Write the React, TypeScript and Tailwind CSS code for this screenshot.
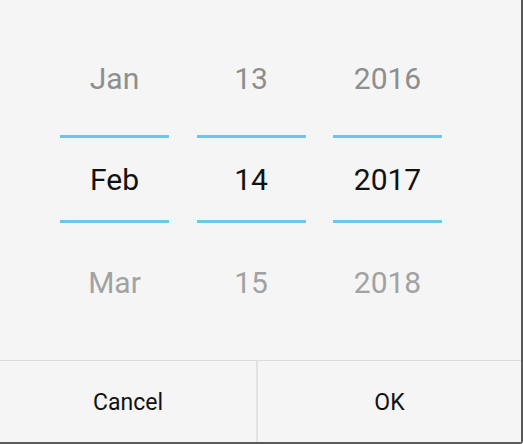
const columns = [
  { prev: "Jan", current: "Feb", next: "Mar" },
  { prev: "13", current: "14", next: "15" },
  { prev: "2016", current: "2017", next: "2018" },
];

function WheelColumn({ prev, current, next }: { prev: string; current: string; next: string }) {
  return (
    <div className="flex w-[109px] flex-col pt-[28px]">
      <div className="flex h-[100px] items-center justify-center text-[30px] text-[#8e8e8e]">{prev}</div>
      <div className="mt-[7px] h-[3px] bg-[#6cc6ea]" />
      <div className="flex h-[82px] items-center justify-center text-[30px] text-[#111]">{current}</div>
      <div className="h-[3px] bg-[#6cc6ea]" />
      <div className="flex h-[118px] items-center justify-center text-[30px] text-[#a2a2a2]">{next}</div>
    </div>
  );
}

export default function App() {
  return (
    <div
      className="h-[444px] w-[523px] overflow-hidden rounded-br-[3px] border-b-2 border-r-2 border-[#5a5a5a] bg-[#f5f5f5]"
      style={{ fontFamily: "Roboto, 'Liberation Sans', sans-serif" }}
    >
      <div className="flex h-[360px] gap-[27.5px] pl-[60px]">
        {columns.map((c) => (
          <WheelColumn key={c.current} {...c} />
        ))}
      </div>
      <div className="flex h-[82px] border-t border-[#dcdcdc]">
        <button className="flex w-[258px] items-center justify-center border-r-2 border-[#e2e2e2] pt-[4px] text-[23px] text-[#111]">
          Cancel
        </button>
        <button className="flex flex-1 items-center justify-center pt-[4px] text-[23px] text-[#111]">OK</button>
      </div>
    </div>
  );
}
